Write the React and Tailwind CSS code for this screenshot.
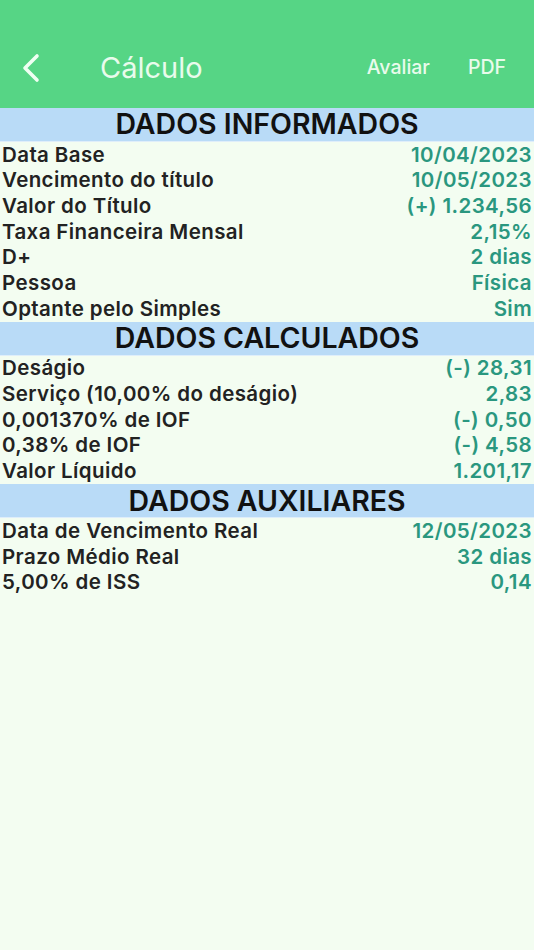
const sections = [
  {
    title: 'DADOS INFORMADOS',
    rows: [
      ['Data Base', '10/04/2023'],
      ['Vencimento do título', '10/05/2023'],
      ['Valor do Título', '(+) 1.234,56'],
      ['Taxa Financeira Mensal', '2,15%'],
      ['D+', '2 dias'],
      ['Pessoa', 'Física'],
      ['Optante pelo Simples', 'Sim'],
    ],
  },
  {
    title: 'DADOS CALCULADOS',
    rows: [
      ['Deságio', '(-) 28,31'],
      ['Serviço (10,00% do deságio)', '2,83'],
      ['0,001370% de IOF', '(-) 0,50'],
      ['0,38% de IOF', '(-) 4,58'],
      ['Valor Líquido', '1.201,17'],
    ],
  },
  {
    title: 'DADOS AUXILIARES',
    rows: [
      ['Data de Vencimento Real', '12/05/2023'],
      ['Prazo Médio Real', '32 dias'],
      ['5,00% de ISS', '0,14'],
    ],
  },
];

export default function App() {
  return (
    <div className="min-h-[950px] w-[534px] bg-[#f3fdf1] font-['Inter',sans-serif]">
      {/* Header */}
      <div className="flex h-[108px] items-center bg-[#56d585] pt-[28px]">
        <div className="flex h-[80px] w-full items-center">
          <svg className="ml-[20px] h-[30px] w-[22px]" viewBox="0 0 22 30" fill="none">
            <polyline points="17,3 5,15 17,27" stroke="#f0fff3" strokeWidth="3.6" strokeLinecap="round" strokeLinejoin="round" />
          </svg>
          <span className="ml-[58px] text-[29px] font-normal text-[#e9fbec]">Cálculo</span>
          <div className="ml-auto flex items-center gap-[38px] pr-[28px] text-[19.5px] font-medium text-[#e9fbec]">
            <span>Avaliar</span>
            <span>PDF</span>
          </div>
        </div>
      </div>

      {sections.map((s) => (
        <div key={s.title}>
          <div className="flex h-[34px] items-center justify-center border-b border-[#dfeefa] bg-[#b9dbf7] text-[28.5px] font-semibold leading-none text-[#111]">
            {s.title}
          </div>
          {s.rows.map(([label, value]) => (
            <div key={label} className="flex h-[25.7px] items-center justify-between px-[2px] text-[20.5px] font-semibold leading-none tracking-[0.4px]">
              <span className="text-[#222]">{label}</span>
              <span className="text-[#2a977f]">{value}</span>
            </div>
          ))}
        </div>
      ))}
    </div>
  );
}
